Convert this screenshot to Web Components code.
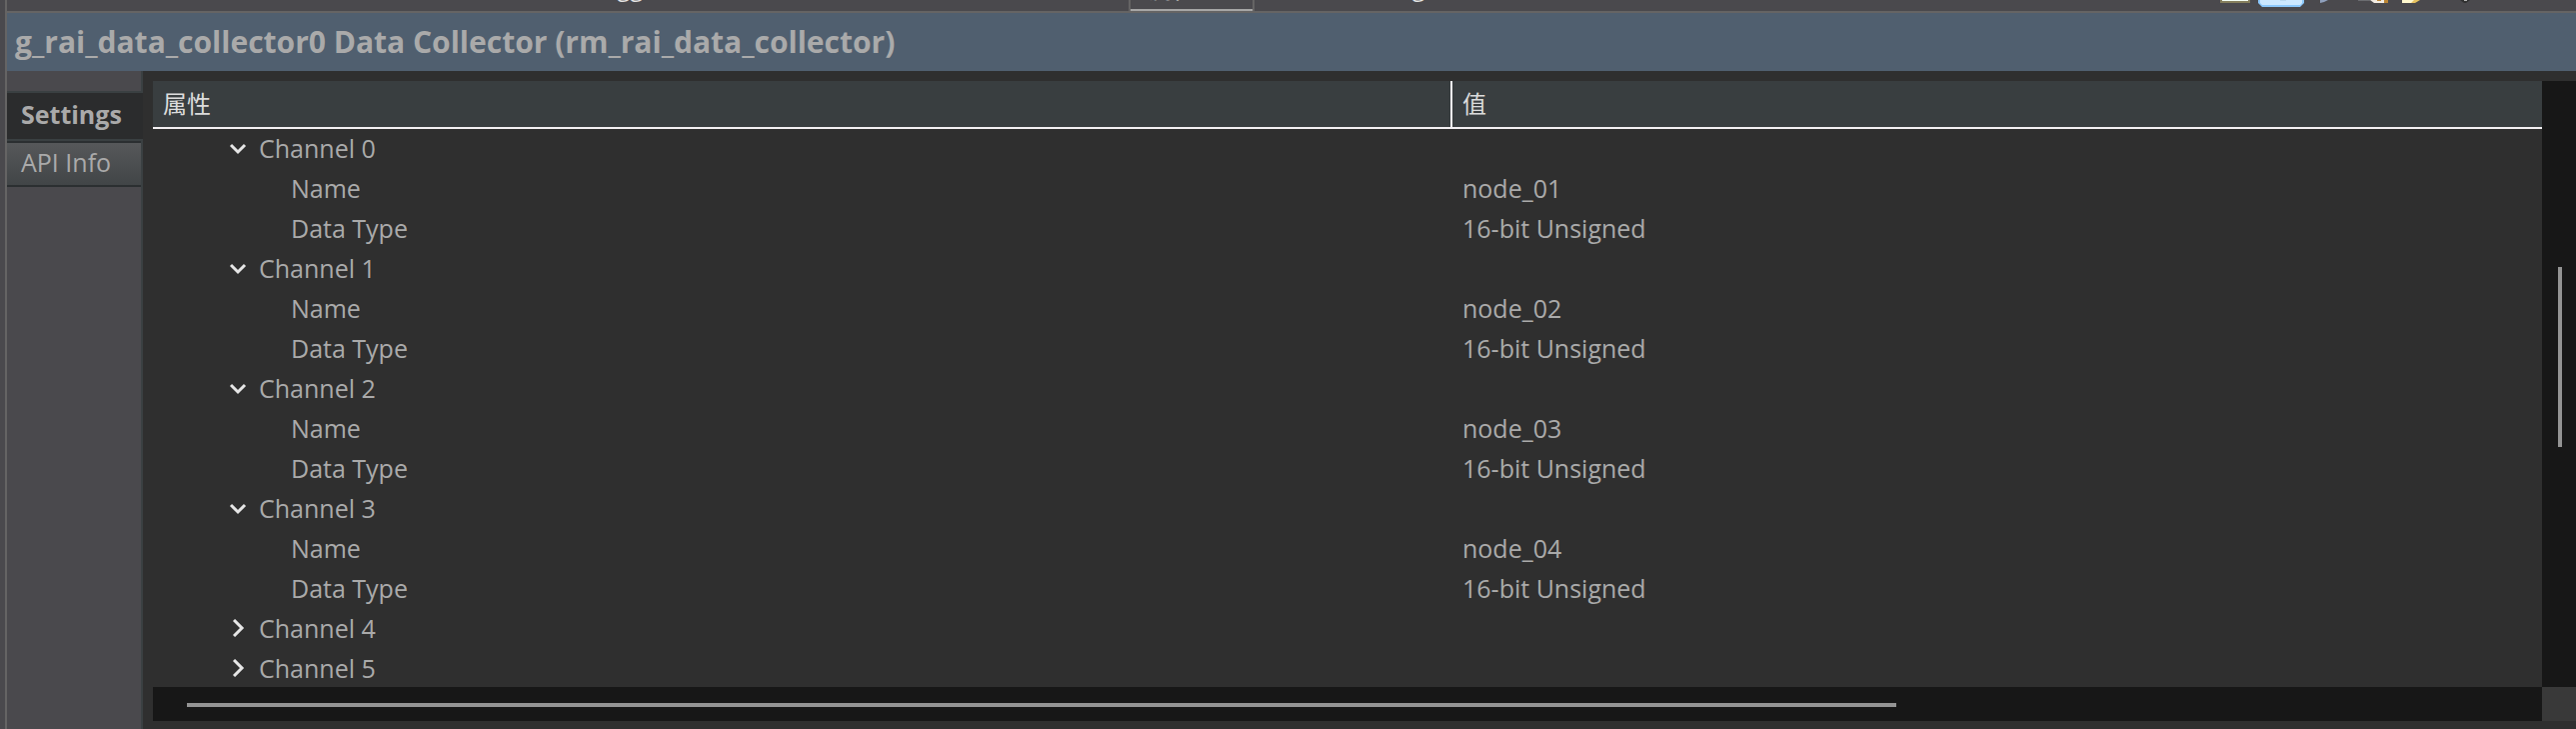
<!DOCTYPE html>
<html lang="zh-CN">
<head>
<meta charset="utf-8">
<title>Properties</title>
<style>
  body {
    margin: 0;
    background-color: #4a494d;
    color: #aaaaaa;
    font-family: "Open Sans", "Noto Sans CJK SC", sans-serif;
    font-size: 25px;
  }
</style>
</head>
<body>
<properties-view></properties-view>

<script>
class ViewTabs extends HTMLElement {

    constructor() {
      super();
      this.shadowDOM = this.attachShadow({mode: 'open'});
    }

    connectedCallback() {
      this.shadowDOM.innerHTML = `
        <style>
            * {
              box-sizing: border-box;
            }
            :host {
              display: flex;
              justify-content: space-between;
              height: 13px;
              overflow: hidden;
              background-color: #4a494d;
              border-bottom: 2px solid #656464;
            }
            nav, .tools {
              display: flex;
              align-items: flex-end;
            }
            button {
              height: 40px;
              padding: 0 0 12px 34px;
              border: 0;
              background: none;
              color: #e4e4e4;
              font: inherit;
              font-size: 24px;
              line-height: 28px;
              text-align: left;
              white-space: nowrap;
            }
            nav {
              height: 13px;
            }
            button.active {
              padding: 0 0 8px 18px;
              background-color: #4a494d;
              border: solid #656464;
              border-width: 0 2px;
              color: #ffffff;
              box-shadow: inset 0 -4px #a6a6a6;
            }
            button.active + button {
              padding-left: 24px;
            }
            .tools {
              height: 8px;
              padding-right: 76px;
              align-items: flex-start;
            }
            svg {
              display: block;
            }
        </style>

        <nav>
          <button style="width:148px">引脚配置</button>
          <button style="width:368px">问题</button>
          <button style="width:290px">Debugger Console</button>
          <button style="width:134px">内存</button>
          <button style="width:182px">智能浏览器</button>
          <button class="active" style="width:126px">属性</button>
          <button>Smart Debug</button>
        </nav>
        <div class="tools">
          <svg width="280" height="8" viewBox="0 0 280 8">
            <path d="M0 0h30v3H0z" fill="#857e5c"/>
            <path d="M2 0h26v1H2z" fill="#f4fff5"/>
            <path d="M38 0h46v3l-4 4H42l-4-4z" fill="#8cc8fb"/>
            <path d="M40 0h42v3l-2 2H42l-2-2z" fill="#cce8ff"/>
            <path d="M60 0h6v1h-6z" fill="#b8d8f0"/>
            <path d="M100 0h8l-4 2-4 1z" fill="#8fa0bd"/>
            <path d="M138 0h12v1h-12z" fill="#6b6c70"/>
            <path d="M150 0h18v3h-14z" fill="#f2ebe2"/>
            <path d="M157 0h4v1h-4zM164 0h4v3h-4z" fill="#bb8534"/>
            <path d="M182 0h18l-5 3h-13z" fill="#e8c360"/>
            <path d="M182 0h12l-3 3h-9z" fill="#fff8ce"/>
            <path d="M240 0h10l-4 3h-2z" fill="#303030"/>
            <path d="M244 0h3v1h-3z" fill="#b5b5b5"/>
          </svg>
        </div>
      `;
    }
}

class ViewTitle extends HTMLElement {

    constructor() {
      super();
      this.shadowDOM = this.attachShadow({mode: 'open'});
      this.shadowDOM.innerHTML = `
        <style>
            :host {
              display: block;
              background-color: #505f6f;
            }
            h1 {
              margin: 0;
              padding: 9px 8px;
              font-size: 30px;
              font-weight: bold;
              line-height: 40px;
              white-space: nowrap;
            }
        </style>

        <h1><slot></slot></h1>
      `;
    }
}

class SideTab extends HTMLElement {

    constructor() {
      super();
      this.shadowDOM = this.attachShadow({mode: 'open'});
    }

    connectedCallback() {
      this.shadowDOM.innerHTML = `
        <style>
            :host {
              display: block;
              border: solid #2b2f31;
              border-width: 2px 0;
              margin-right: 2px;
              background: linear-gradient(#56585a, #414547);
            }
            :host([selected]) {
              border-color: #3a4042;
              margin-right: 0;
              background: #2b2c2d;
              font-weight: bold;
            }
            button {
              display: block;
              width: 100%;
              height: 42px;
              padding: 0 14px 4px;
              border: 0;
              background: none;
              color: inherit;
              font: inherit;
              line-height: 36px;
              text-align: left;
              white-space: nowrap;
            }
            :host([selected]) button {
              height: 46px;
            }
        </style>

        <button><slot></slot></button>
      `;
    }
}

class ScrollTrack extends HTMLElement {

    constructor() {
      super();
      this.shadowDOM = this.attachShadow({mode: 'open'});
    }

    connectedCallback() {
      const vertical = this.getAttribute('direction') === 'vertical';
      const tracks = this.getAttribute('parts').split(' ').map((part) => `${part}fr`).join(' ');
      this.shadowDOM.innerHTML = `
        <style>
            :host {
              display: grid;
              background-color: #171717;
              ${vertical
                ? `grid-template: ${tracks} / 16px 4px`
                : `grid-template: 16px 4px / ${tracks}`};
            }
            .thumb {
              grid-area: 2 / 2;
              background-color: #949494;
            }
        </style>

        <div class="thumb"></div>
      `;
    }
}

class PropertyTree extends HTMLElement {

    constructor() {
      super();
      this.shadowDOM = this.attachShadow({mode: 'open'});
    }

    set channels(channels) {
      this._channels = channels;
      this.render();
    }

    renderChannel(channel, index) {
      const arrow = channel.open ? 'M2 6l7 7 7-7' : 'M5 1l8 8-8 8';
      const children = channel.open ? `
        <tr><td class="leaf">Name</td><td>${channel.name}</td></tr>
        <tr><td class="leaf">Data Type</td><td>${channel.type}</td></tr>` : '';
      return `
        <tr>
          <td class="branch">
            <button data-index="${index}" aria-expanded="${channel.open}">
              <svg width="18" height="18" viewBox="0 0 18 18"><path d="${arrow}"/></svg>
              <span>Channel ${index}</span>
            </button>
          </td>
          <td></td>
        </tr>${children}`;
    }

    render() {
      this.shadowDOM.innerHTML = `
        <style>
            * {
              box-sizing: border-box;
            }
            :host {
              display: block;
              overflow: hidden;
              background-color: #2f2f2f;
            }
            table {
              width: 100%;
              table-layout: fixed;
              border-spacing: 0;
            }
            .property {
              width: 1298px;
            }
            th {
              height: 48px;
              padding: 0 10px;
              background-color: #393e40;
              border-bottom: 2px solid #f3f0f3;
              color: #dcdcdc;
              font-size: 24px;
              font-weight: normal;
              line-height: 36px;
              text-align: left;
            }
            th + th {
              border-left: 2px solid #f3f0f3;
            }
            td {
              height: 40px;
              padding: 0 12px;
              line-height: 38px;
              vertical-align: top;
              white-space: nowrap;
            }
            td.leaf {
              padding-left: 138px;
            }
            td.branch {
              padding-left: 76px;
            }
            button {
              display: flex;
              align-items: center;
              gap: 12px;
              height: 38px;
              padding: 0;
              border: 0;
              background: none;
              color: inherit;
              font: inherit;
            }
            path {
              fill: none;
              stroke: #e6e6e6;
              stroke-width: 3;
            }
        </style>

        <table>
          <thead>
            <tr><th class="property">属性</th><th>值</th></tr>
          </thead>
          <tbody>
            ${this._channels.map((channel, index) => this.renderChannel(channel, index)).join('')}
          </tbody>
        </table>
      `;
      this.shadowDOM.querySelectorAll('button').forEach((button) => {
        button.addEventListener('click', () => {
          const channel = this._channels[button.dataset.index];
          channel.open = !channel.open;
          this.render();
        });
      });
    }
}

class PropertiesView extends HTMLElement {

    constructor() {
      super();
      this.shadowDOM = this.attachShadow({mode: 'open'});
    }

    connectedCallback() {
      this.shadowDOM.innerHTML = `
        <style>
            * {
              box-sizing: border-box;
            }
            :host {
              display: flex;
              flex-direction: column;
              height: 100vh;
              padding-left: 5px;
              box-sizing: border-box;
              overflow: hidden;
            }
            main {
              flex: 1;
              min-height: 0;
              display: flex;
              flex-direction: column;
              border-left: 2px solid #656464;
            }
            view-tabs {
              flex: none;
              border-left: 2px solid #656464;
            }
            .content {
              flex: 1;
              min-height: 0;
              display: flex;
            }
            aside {
              flex: none;
              width: 136px;
              padding-top: 20px;
              background: linear-gradient(to left, #3a4042 2px, #4a494d 2px);
            }
            .panel {
              flex: 1;
              min-width: 0;
              display: grid;
              grid-template: minmax(0, 1fr) 34px / minmax(0, 1fr) 34px;
              padding: 10px 0 8px 10px;
              background-color: #2f2f2f;
            }
            .corner {
              background-color: #393939;
            }
        </style>

        <view-tabs></view-tabs>
        <main>
          <view-title>g_rai_data_collector0 Data Collector (rm_rai_data_collector)</view-title>
          <div class="content">
            <aside>
              <side-tab selected>Settings</side-tab>
              <side-tab>API Info</side-tab>
            </aside>
            <div class="panel">
              <property-tree></property-tree>
              <scroll-track direction="vertical" parts="186 180 240"></scroll-track>
              <scroll-track direction="horizontal" parts="34 1710 646"></scroll-track>
              <div class="corner"></div>
            </div>
          </div>
        </main>
      `;
      this.shadowDOM.querySelector('property-tree').channels = [
        {name: 'node_01', type: '16-bit Unsigned', open: true},
        {name: 'node_02', type: '16-bit Unsigned', open: true},
        {name: 'node_03', type: '16-bit Unsigned', open: true},
        {name: 'node_04', type: '16-bit Unsigned', open: true},
        {name: 'node_05', type: '16-bit Unsigned', open: false},
        {name: 'node_06', type: '16-bit Unsigned', open: false},
      ];
    }
}

customElements.define('view-tabs', ViewTabs);
customElements.define('view-title', ViewTitle);
customElements.define('side-tab', SideTab);
customElements.define('scroll-track', ScrollTrack);
customElements.define('property-tree', PropertyTree);
customElements.define('properties-view', PropertiesView);
</script>
</body>
</html>
